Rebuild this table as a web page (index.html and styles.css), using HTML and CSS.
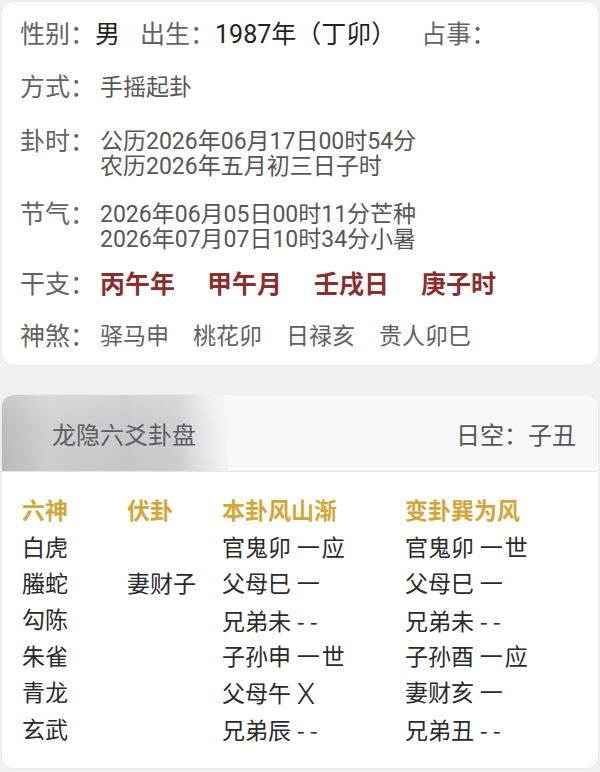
FILE: index.html
```html
<!DOCTYPE html>
<html lang="zh-CN">
<head>
<meta charset="utf-8">
<title>六爻卦盘</title>
<link rel="stylesheet" href="styles.css">
</head>
<body>
<div class="page">
  <section class="card info">
    <div class="row r1">
      <span class="lbl">性别：</span><span class="val dark">男</span>
      <span class="lbl gap1">出生：</span><span class="val dark">1987年（丁卯）</span>
      <span class="lbl gap2">占事：</span>
    </div>
    <div class="row r2">
      <span class="lbl">方式：</span>
      <div class="val">手摇起卦</div>
    </div>
    <div class="row r3">
      <span class="lbl">卦时：</span>
      <div class="val multi">
        <div>公历2026年06月17日00时54分</div>
        <div>农历2026年五月初三日子时</div>
      </div>
    </div>
    <div class="row r4">
      <span class="lbl">节气：</span>
      <div class="val multi">
        <div>2026年06月05日00时11分芒种</div>
        <div>2026年07月07日10时34分小暑</div>
      </div>
    </div>
    <div class="row r5">
      <span class="lbl">干支：</span>
      <div class="val ganzhi">
        <span>丙午年</span><span>甲午月</span><span>壬戌日</span><span>庚子时</span>
      </div>
    </div>
    <div class="row r6">
      <span class="lbl">神煞：</span>
      <div class="val shensha">
        <span>驿马申</span><span>桃花卯</span><span>日禄亥</span><span>贵人卯巳</span>
      </div>
    </div>
  </section>

  <section class="card pan">
    <header class="pan-head">
      <div class="tab">龙隐六爻卦盘</div>
      <div class="kong">日空：子丑</div>
    </header>
    <div class="table">
      <div class="th">六神</div><div class="th">伏卦</div><div class="th">本卦风山渐</div><div class="th">变卦巽为风</div>

      <div>白虎</div><div></div><div>官鬼卯 <span class="yang">一</span>应</div><div>官鬼卯 <span class="yang">一</span>世</div>
      <div>螣蛇</div><div>妻财子</div><div>父母巳 <span class="yang">一</span></div><div>父母巳 <span class="yang">一</span></div>
      <div>勾陈</div><div></div><div>兄弟未 <span class="yin">--</span></div><div>兄弟未 <span class="yin">--</span></div>
      <div>朱雀</div><div></div><div>子孙申 <span class="yang">一</span>世</div><div>子孙酉 <span class="yang">一</span>应</div>
      <div>青龙</div><div></div><div>父母午 <span class="cross">X</span></div><div>妻财亥 <span class="yang">一</span></div>
      <div>玄武</div><div></div><div>兄弟辰 <span class="yin">--</span></div><div>兄弟丑 <span class="yin">--</span></div>
    </div>
  </section>
</div>
</body>
</html>
```

FILE: styles.css
```css
* { box-sizing: border-box; }

html, body {
  margin: 0;
  padding: 0;
  background: #f1f1f4;
}

body {
  font-family: Roboto, "Noto Sans CJK SC", sans-serif;
  color: #333;
}

.page {
  width: 600px;
  height: 772px;
  padding: 2px 2px 0;
  display: flex;
  flex-direction: column;
  gap: 30px;
}

.card {
  background: #fff;
  border-radius: 12px;
  box-shadow: 0 0 3px rgba(0, 0, 0, 0.07);
}

/* ---------- info card ---------- */
.info {
  height: 363px;
  flex: none;
  padding: 20px 18px 0 18px;
  display: flex;
  flex-direction: column;
}

.row {
  display: flex;
  align-items: flex-start;
  line-height: 26px;
}

.r1 { align-items: baseline; }
.r2 { margin-top: 27px; }
.r3 { margin-top: 28px; }
.r4 { margin-top: 23px; }
.r5 { margin-top: 20px; }
.r6 { margin-top: 26px; }

.lbl {
  font-size: 25px;
  color: #636363;
  white-space: nowrap;
  flex: none;
  width: 80px;
}

.r1 .lbl { width: auto; }

.lbl.gap1 { margin-left: 20px; }
.lbl.gap2 { margin-left: 25px; }

.val {
  font-size: 23px;
  color: #565656;
}

.val.multi { line-height: 25px; }

.val.dark {
  font-size: 25px;
  color: #222;
}

.ganzhi {
  display: flex;
  gap: 32px;
  font-size: 25px;
  font-weight: bold;
  color: #8b2e2e;
}

.shensha {
  display: flex;
  gap: 24px;
  color: #606060;
}

/* ---------- pan card ---------- */
.pan {
  flex: none;
  height: 373px;
  overflow: hidden;
}

.pan-head {
  height: 77px;
  display: flex;
  align-items: center;
  justify-content: space-between;
  background: #f8f8fa;
  border-bottom: 1px solid #e6e6e8;
}

.tab {
  align-self: stretch;
  width: 226px;
  display: flex;
  align-items: center;
  padding-left: 50px;
  font-size: 24px;
  color: #5c5e62;
  background:
    linear-gradient(to bottom, rgba(255,255,255,0.18), rgba(255,255,255,0) 40%, rgba(0,0,0,0.02)),
    linear-gradient(to right, #bcbdc0 0%, #cfd0d3 20%, #c9cacd 55%, #cfd0d3 78%, #e4e5e7 88%, #f8f8fa 100%);
}

.kong {
  padding-right: 22px;
  font-size: 24px;
  color: #555;
}

.table {
  display: grid;
  grid-template-columns: 105px 95px 183px 1fr;
  grid-auto-rows: 36.4px;
  align-items: center;
  padding: 22px 0 0 20px;
  font-size: 23px;
  color: #2a2a2a;
  line-height: 36px;
}

.th {
  color: #d2a63a;
  font-weight: bold;
}

.yang {
  display: inline-block;
  margin-right: 2px;
}

.yin {
  font-family: "Noto Sans CJK SC", sans-serif;
  letter-spacing: 5px;
  color: #333;
}

.cross {
  font-family: Roboto, sans-serif;
  font-size: 30px;
  font-weight: 300;
  color: #2a2a2a;
  vertical-align: -2px;
}
```
